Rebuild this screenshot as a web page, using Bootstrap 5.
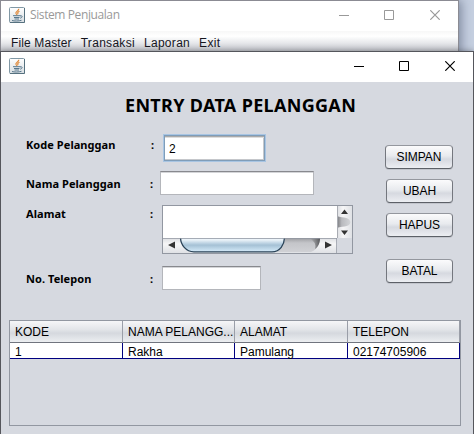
<!DOCTYPE html>
<html lang="id">
<head>
<meta charset="utf-8">
<title>Sistem Penjualan</title>
<link href="https://cdn.jsdelivr.net/npm/bootstrap@5.3.0/dist/css/bootstrap.min.css" rel="stylesheet">
<style>
body{width:474px;height:434px;background:#c5cfe0;font:12px/14px "Liberation Sans",Arial,sans-serif;color:#000}
svg{display:block;flex:none}
.main-win{width:459px;height:434px;border:1px solid #8b8b93;border-bottom:0;box-shadow:2px 0 10px rgba(50,60,85,.5)}
.bar{height:30px;padding:0 18px 2px 8px;background:#fff}
.bar-text{font:12px/16px "Open Sans","Noto Sans",sans-serif;color:#999;letter-spacing:-.4px;margin-left:5px}
.menu{height:21px;padding:3px 0 0 10px;gap:9px;letter-spacing:.12px;color:#16161e;background:linear-gradient(#f7f7f7,#fff 25%,#e8e9ec 55%,#c0c2c9)}
.menu span:nth-child(n+2){letter-spacing:.3px}
.caption-btns{gap:35px}
.caption-btns svg:last-child{margin-left:1px}
.inactive{color:#999}
.dialog-win{left:0;top:51px;width:474px;height:383px;background:#d6d9e0;border:1px solid #55565c;border-bottom:0;box-shadow:0 0 6px rgba(0,0,0,.35)}
.heading{font:bold 18px/24px "Noto Sans",sans-serif;letter-spacing:.32px;padding:11px 0 0 124px;margin:0;height:52px;white-space:nowrap}
.form-zone{height:186px}
.fields{width:384px;padding-left:25px}
.field-row{font:bold 11px/14px "Noto Sans",sans-serif;letter-spacing:.06px}
.field-name{width:124px}
.colon{width:12px}
.drop-4{padding-top:4px}
.drop-6{padding-top:6px}
.drop-2{padding-top:2px}
.box{border:1px solid #b4b6bb;border-top-color:#88898e;background:#fff;box-shadow:inset 0 1px #d4d5d8;border-radius:0;padding:1px 4px 0;height:24px;font:12px/14px "Liberation Sans",Arial,sans-serif;outline:0}
.box-active{height:28px;width:103px;border:2px solid #7f9db9;box-shadow:inset 0 1px #aaa,inset 0 2px #ddd,inset -1px -1px #c5c7cb;outline:1px solid #a8c5e3;outline-offset:-1px}
.area-wrap{width:191px;height:49px;border:1px solid #9297a1;display:grid;grid-template-columns:174px 15px;grid-template-rows:32px 15px}
.area{border:0;resize:none;overflow:hidden;padding:2px;width:174px;height:32px;outline:0;background:#fff}
.actions{width:68px;padding-top:11px}
.push{width:67px;height:24px;padding:0;font-size:12px;line-height:14px;letter-spacing:-.05px;color:#000;border:1px solid #75797f;border-color:#94979e #74777e #5c6067;border-radius:4px;background:linear-gradient(#fbfbfc,#e8eaee 45%,#d6d9e0 60%,#eceef2);box-shadow:0 1px 0 #c2c5cc}
.push + .push{margin-top:10px}
.push + .push-apart{margin-top:22px}
.grid-box{width:452px;height:106px;margin-left:8px;border:1px solid #9297a1}
.data{display:grid;grid-template-columns:113px 112px 113px 112px}
.head-cell{height:22px;padding:4px 5px 0;border-right:1px solid #9a9ea8;border-bottom:1px solid #70747e;background:linear-gradient(#f6f6f8,#e3e5e9 40%,#d5d8de 58%,#eceef1);white-space:nowrap}
.data-cell{height:16px;padding:3px 5px 0;line-height:13px;background:#fff;border-right:1px solid #000080;border-bottom:1px solid #000080}
</style>
</head>
<body class="position-relative overflow-hidden">
<svg width="0" height="0" class="position-absolute">
<defs>
<linearGradient id="cupBg" x2="0" y2="1"><stop stop-color="#fff"/><stop offset="1" stop-color="#d8dee2"/></linearGradient>
<symbol id="java" viewBox="0 0 16 16">
<rect x=".5" y=".5" width="15" height="15" rx="1" fill="url(#cupBg)" stroke="#8198a5"/>
<path d="M15.5 1v14.5H1" fill="none" stroke="#56717f"/>
<path d="M9.8 1.8C10 4 6 4.500 7 6.500L8 7.800M10.500 4.300C8.500 5 8.500 6 9 7.200" fill="none" stroke="#e08a3c" stroke-width="1.200"/>
<path d="M4 8.700h7.500M5 10.500h5.500M5.500 12h4.500M3 13.500c2 .7 7 .7 9.500-.2M11 9c3-1 2.500 1.800.2 2.200" fill="none" stroke="#58778c"/>
</symbol>
<symbol id="min" viewBox="0 0 10 10"><path d="M0 5.500h10" stroke="currentColor"/></symbol>
<symbol id="max" viewBox="0 0 10 10"><path d="M.5.5h9v9h-9z" fill="none" stroke="currentColor"/></symbol>
<symbol id="cls" viewBox="0 0 10 10"><path d="M.3.300l9.400 9.400M9.700.3.300 9.700" stroke="currentColor" stroke-width="1.200"/></symbol>
</defs>
</svg>

<div class="main-win bg-white">
  <div class="bar d-flex align-items-center">
    <svg width="16" height="16"><use href="#java"/></svg>
    <span class="bar-text">Sistem Penjualan</span>
    <div class="caption-btns inactive d-flex ms-auto">
      <svg width="10" height="10"><use href="#min"/></svg>
      <svg width="10" height="10"><use href="#max"/></svg>
      <svg width="10" height="10"><use href="#cls"/></svg>
    </div>
  </div>
  <nav class="menu d-flex align-items-center"><span>File Master</span><span>Transaksi</span><span>Laporan</span><span>Exit</span></nav>
</div>

<div class="dialog-win position-absolute">
  <div class="bar d-flex align-items-center">
    <svg width="16" height="16"><use href="#java"/></svg>
    <div class="caption-btns d-flex ms-auto">
      <svg width="10" height="10"><use href="#min"/></svg>
      <svg width="10" height="10"><use href="#max"/></svg>
      <svg width="10" height="10"><use href="#cls"/></svg>
    </div>
  </div>
  <h1 class="heading">ENTRY DATA PELANGGAN</h1>
  <div class="form-zone d-flex">
    <div class="fields">
      <div class="field-row d-flex" style="height:37px">
        <span class="field-name drop-4" style="width:125px">Kode Pelanggan</span><span class="colon drop-4">:</span>
        <input class="box box-active" value="2">
      </div>
      <div class="field-row d-flex" style="height:34px">
        <span class="field-name drop-6">Nama Pelanggan</span><span class="colon drop-6" style="width:10px">:</span>
        <input class="box" style="width:154px">
      </div>
      <div class="field-row d-flex" style="height:61px">
        <span class="field-name drop-2">Alamat</span><span class="colon drop-2">:</span>
        <div class="area-wrap">
          <textarea class="area"></textarea>
          <svg width="15" height="32">
            <defs>
              <linearGradient id="btnH"><stop stop-color="#dcdee2"/><stop offset=".4" stop-color="#f6f6f7"/><stop offset="1" stop-color="#dfe1e5"/></linearGradient>
              <linearGradient id="trackH"><stop stop-color="#77787c"/><stop offset=".35" stop-color="#b9babe"/><stop offset="1" stop-color="#d3d5d8"/></linearGradient>
            </defs>
            <path fill="url(#btnH)" d="M0 0h15v32H0z"/>
            <path fill="url(#trackH)" d="M0 10c3 2 12 0 13.500 6C13 22 3 20 0 22z"/>
            <path d="M.5 0v32" stroke="#a9acb3"/>
            <path fill="#333" d="M4 8l3.500-4.500L11 8zM4 24.500h7L7.500 29z"/>
          </svg>
          <svg width="174" height="15">
            <defs>
              <linearGradient id="btnV" x2="0" y2="1"><stop stop-color="#dcdee2"/><stop offset=".4" stop-color="#f6f6f7"/><stop offset="1" stop-color="#dfe1e5"/></linearGradient>
              <linearGradient id="trackV" x2="0" y2="1"><stop stop-color="#9c9da1"/><stop offset=".35" stop-color="#c4c5c9"/><stop offset="1" stop-color="#d0d1d5"/></linearGradient>
              <linearGradient id="endV" x1="0" x2="1"><stop stop-color="#777" stop-opacity="0"/><stop offset="1" stop-color="#55565a"/></linearGradient>
              <linearGradient id="thumb" x2="0" y2="1"><stop stop-color="#c9dcea"/><stop offset=".18" stop-color="#eef5fa"/><stop offset=".42" stop-color="#bdd3e3"/><stop offset=".55" stop-color="#a5c1d5"/><stop offset="1" stop-color="#d5ebfa"/></linearGradient>
            </defs>
            <path fill="url(#btnV)" d="M0 0h174v15H0z"/>
            <path fill="url(#trackV)" d="M17 0h140c0 6-3 12-9 14H31C23 14 17 6 17 0z"/>
            <path fill="url(#endV)" d="M146 0h11c0 5-2 9-5 11q2-7-6-11z"/>
            <path fill="url(#thumb)" stroke="#2b4459" stroke-width="1.300" d="M17.500-1C17.500 7 23 13.800 31 13.800h78c8 0 12.500-7 12.500-14.800z"/>
            <path d="M0 .5h174M173.500 0v15" stroke="#9297a1" stroke-opacity=".75" fill="none"/>
            <path fill="#333" d="M12 3.500v7l-7-3.500zM162 3.500v7l7-3.500z"/>
          </svg>
        </div>
      </div>
      <div class="field-row d-flex">
        <span class="field-name drop-6">No. Telepon</span><span class="colon drop-6">:</span>
        <input class="box" style="width:99px">
      </div>
    </div>
    <div class="actions d-flex flex-column align-items-end">
      <button class="btn push w-100">SIMPAN</button>
      <button class="btn push">UBAH</button>
      <button class="btn push">HAPUS</button>
      <button class="btn push push-apart">BATAL</button>
    </div>
  </div>
  <div class="grid-box">
    <div class="data">
      <div class="head-cell">KODE</div><div class="head-cell">NAMA PELANGG...</div><div class="head-cell">ALAMAT</div><div class="head-cell">TELEPON</div>
      <div class="data-cell">1</div><div class="data-cell">Rakha</div><div class="data-cell">Pamulang</div><div class="data-cell">02174705906</div>
    </div>
  </div>
</div>
<script src="https://cdn.jsdelivr.net/npm/bootstrap@5.3.0/dist/js/bootstrap.bundle.min.js"></script>
</body>
</html>
